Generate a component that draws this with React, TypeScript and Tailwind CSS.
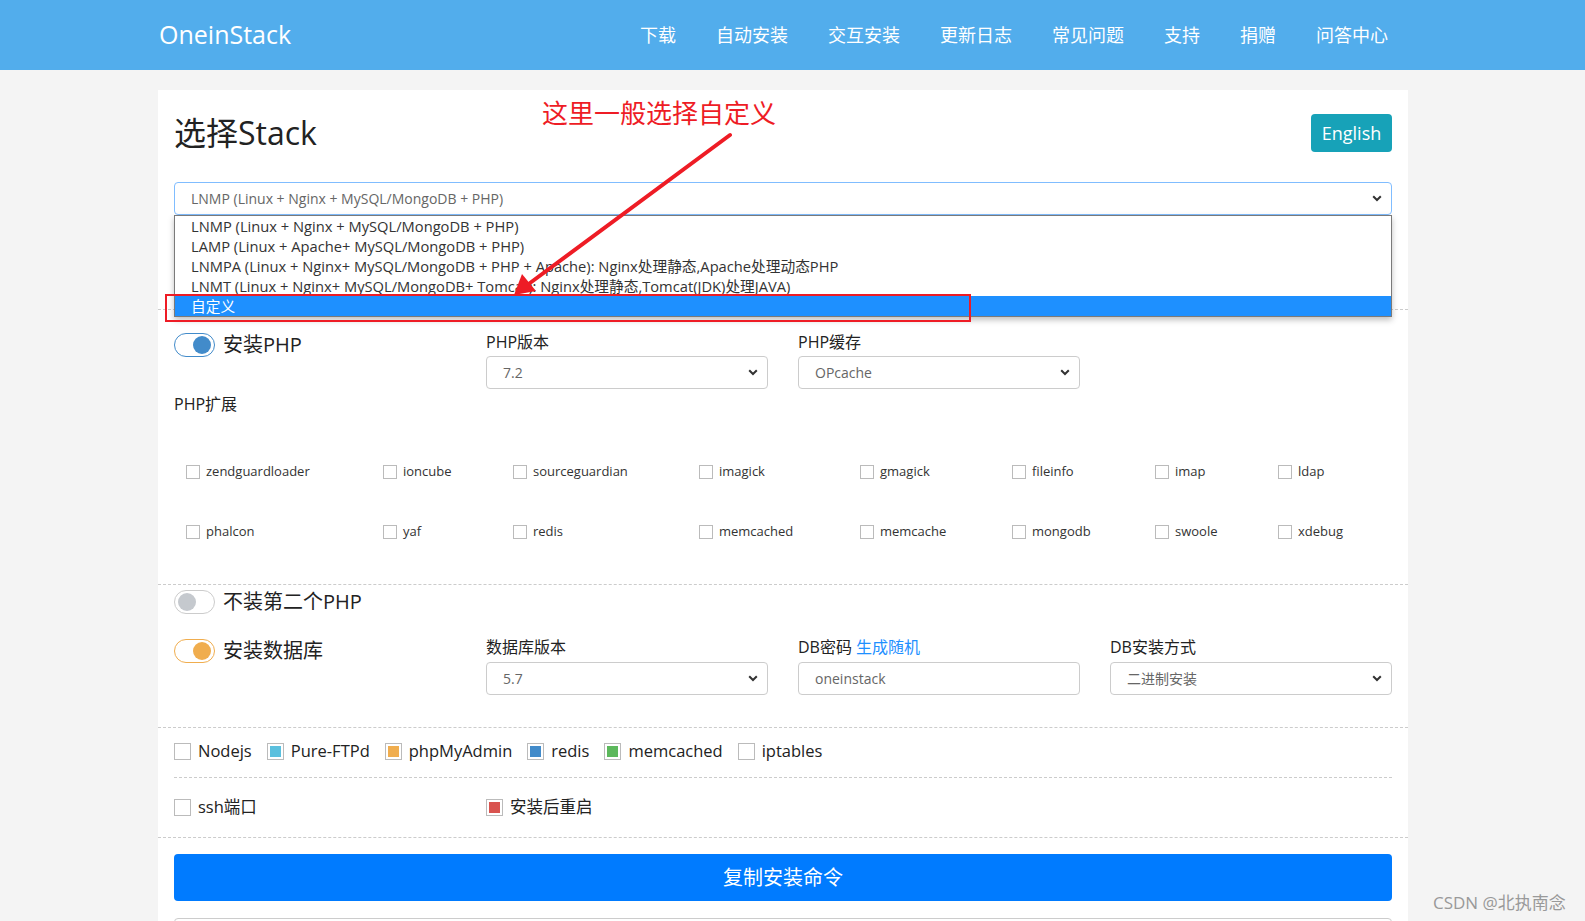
import React from 'react';

const FONT = '"Open Sans", "Noto Sans CJK SC", sans-serif';

const navItems = ['下载', '自动安装', '交互安装', '更新日志', '常见问题', '支持', '捐赠', '问答中心'];

const stackOptions = [
  'LNMP (Linux + Nginx + MySQL/MongoDB + PHP)',
  'LAMP (Linux + Apache+ MySQL/MongoDB + PHP)',
  'LNMPA (Linux + Nginx+ MySQL/MongoDB + PHP + Apache): Nginx处理静态,Apache处理动态PHP',
  'LNMT (Linux + Nginx+ MySQL/MongoDB+ Tomcat): Nginx处理静态,Tomcat(JDK)处理JAVA)',
  '自定义',
];

const extRows = [
  ['zendguardloader', 'ioncube', 'sourceguardian', 'imagick', 'gmagick', 'fileinfo', 'imap', 'ldap'],
  ['phalcon', 'yaf', 'redis', 'memcached', 'memcache', 'mongodb', 'swoole', 'xdebug'],
];

const Chevron = () => (
  <svg width="10" height="7" viewBox="0 0 10 7" className="shrink-0">
    <path d="M1.2 1.2 L5 5 L8.8 1.2" fill="none" stroke="#333" strokeWidth="2" />
  </svg>
);

const Select: React.FC<{ value: string; focused?: boolean }> = ({ value, focused }) => (
  <div
    className={`flex h-[33px] items-center justify-between rounded-[4px] border bg-white pl-4 pr-[9px] text-[14px] text-[#666] ${
      focused ? 'border-[#80bdff]' : 'border-[#ccc]'
    }`}
  >
    <span>{value}</span>
    <Chevron />
  </div>
);

const Toggle: React.FC<{ on: boolean; color: string; label: string }> = ({ on, color, label }) => (
  <div className="flex items-center gap-[8px]">
    <div
      className={`flex h-[24px] w-[41px] items-center rounded-full border bg-white px-[3px] ${
        on ? 'justify-end' : 'justify-start'
      }`}
      style={{ borderColor: on ? color : '#ccc' }}
    >
      <div className="h-[18px] w-[18px] rounded-full" style={{ backgroundColor: color }} />
    </div>
    <span className="text-[20px] text-[#222]">{label}</span>
  </div>
);

const SmallCheck: React.FC<{ label: string }> = ({ label }) => (
  <div className="flex items-center gap-[6px]">
    <div className="h-[14px] w-[14px] border border-[#bbb] bg-white" />
    <span className="text-[13px] text-[#333]">{label}</span>
  </div>
);

const BigCheck: React.FC<{ label: string; color?: string }> = ({ label, color }) => (
  <div className="flex items-center gap-[7px]">
    <div className="flex h-[17px] w-[17px] items-center justify-center border border-[#bbb] bg-white">
      {color && <div className="h-[11px] w-[11px]" style={{ backgroundColor: color }} />}
    </div>
    <span className="text-[16.5px] text-[#222]">{label}</span>
  </div>
);

const Label: React.FC<{ children: React.ReactNode }> = ({ children }) => (
  <div className="h-[24px] text-[16px] leading-[24px] text-[#222]">{children}</div>
);

export default function App() {
  return (
    <div className="relative min-h-screen bg-[#f4f4f4]" style={{ fontFamily: FONT }}>
      <header className="h-[70px] bg-[#52adec]">
        <div className="ml-[158px] flex h-full w-[1250px] items-center justify-between pl-[1px]">
          <div className="text-[25px] text-white">OneinStack</div>
          <nav className="flex">
            {navItems.map((n) => (
              <span key={n} className="px-[20px] text-[18px] text-white">
                {n}
              </span>
            ))}
          </nav>
        </div>
      </header>

      <main className="ml-[158px] mt-[20px] w-[1250px] bg-white px-4 pb-10 pt-[24px]">
        <div className="flex h-[38px] items-center justify-between">
          <h1 className="text-[32px] leading-[38px] text-[#222]">选择Stack</h1>
          <button className="h-[38px] w-[81px] rounded-[4px] bg-[#17a2b8] text-[18px] text-white">English</button>
        </div>

        <div className="relative mt-[30px]">
          <Select value="LNMP (Linux + Nginx + MySQL/MongoDB + PHP)" focused />
          <div className="absolute left-0 right-0 top-[33px] z-10 border border-[#7a7a7a] bg-white shadow-[0_3px_6px_rgba(0,0,0,0.25)]">
            {stackOptions.map((o, i) => (
              <div
                key={o}
                className={`h-[20px] pl-4 text-[14.7px] leading-[20px] ${
                  i === 4 ? 'bg-[#1e90ff] text-white' : 'text-[#333]'
                }`}
              >
                {o}
              </div>
            ))}
          </div>
        </div>

        <div className="-mx-4 mt-[94px] border-t border-dashed border-[#ccc]" />

        <div className="mt-[20px] grid grid-cols-4 gap-x-[30px]">
          <div>
            <Toggle on color="#428bca" label="安装PHP" />
          </div>
          <div>
            <Label>PHP版本</Label>
            <div className="mt-[2px]">
              <Select value="7.2" />
            </div>
          </div>
          <div>
            <Label>PHP缓存</Label>
            <div className="mt-[2px]">
              <Select value="OPcache" />
            </div>
          </div>
          <div />
        </div>

        <div className="mt-[3px]">
          <Label>PHP扩展</Label>
        </div>

        <div className="ml-[12px] mt-[26px] grid grid-cols-[197px_130px_186px_161px_152px_143px_123px_auto]">
          {extRows.flat().map((e) => (
            <div key={e} className="flex h-[60px] items-center">
              <SmallCheck label={e} />
            </div>
          ))}
        </div>

        <div className="-mx-4 mt-[22px] border-t border-dashed border-[#ccc]" />

        <div className="mt-[2px]">
          <Toggle on={false} color="#c5c9ce" label="不装第二个PHP" />
        </div>

        <div className="mt-[18px] grid grid-cols-4 gap-x-[30px]">
          <div className="pt-[1px]">
            <Toggle on color="#f0ad4e" label="安装数据库" />
          </div>
          <div>
            <Label>数据库版本</Label>
            <div className="mt-[3px]">
              <Select value="5.7" />
            </div>
          </div>
          <div>
            <Label>
              DB密码 <span className="text-[#1e90ff]">生成随机</span>
            </Label>
            <div className="mt-[3px] flex h-[33px] items-center rounded-[4px] border border-[#ccc] pl-4 text-[14px] text-[#666]">
              oneinstack
            </div>
          </div>
          <div>
            <Label>DB安装方式</Label>
            <div className="mt-[3px]">
              <Select value="二进制安装" />
            </div>
          </div>
        </div>

        <div className="-mx-4 mt-[32px] border-t border-dashed border-[#ccc]" />

        <div className="mt-[11px] flex h-[24px] items-center gap-[15px]">
          <BigCheck label="Nodejs" />
          <BigCheck label="Pure-FTPd" color="#5bc0de" />
          <BigCheck label="phpMyAdmin" color="#f0ad4e" />
          <BigCheck label="redis" color="#428bca" />
          <BigCheck label="memcached" color="#5cb85c" />
          <BigCheck label="iptables" />
        </div>

        <div className="mt-[14px] border-t border-dashed border-[#ccc]" />

        <div className="mt-[17px] grid h-[24px] grid-cols-4 items-center gap-x-[30px]">
          <BigCheck label="ssh端口" />
          <BigCheck label="安装后重启" color="#d9534f" />
        </div>

        <div className="-mx-4 mt-[18px] border-t border-dashed border-[#ccc]" />

        <button className="mt-[16px] h-[47px] w-full rounded-[4px] bg-[#007bff] text-[20px] text-white">复制安装命令</button>

        <div className="mt-[17px] h-[80px] rounded-[4px] border border-[#ccc]" />
      </main>

      {/* annotation overlay */}
      <div className="absolute left-[542px] top-[96px] z-20 text-[26px] leading-[34px] text-[#ee1c25]">这里一般选择自定义</div>
      <svg className="pointer-events-none absolute left-0 top-0 z-20" width="1585" height="921">
        <line x1="730" y1="135" x2="530" y2="283" stroke="#ee1c25" strokeWidth="4" strokeLinecap="round" />
        <polygon points="514,295 522,274 536,291" fill="#ee1c25" />
        <rect x="166" y="295" width="804" height="26" fill="none" stroke="#ee1c25" strokeWidth="2" />
      </svg>

      <div className="absolute left-[1433px] top-[890px] z-20 text-[17px] text-[#999]">CSDN @北执南念</div>
    </div>
  );
}
